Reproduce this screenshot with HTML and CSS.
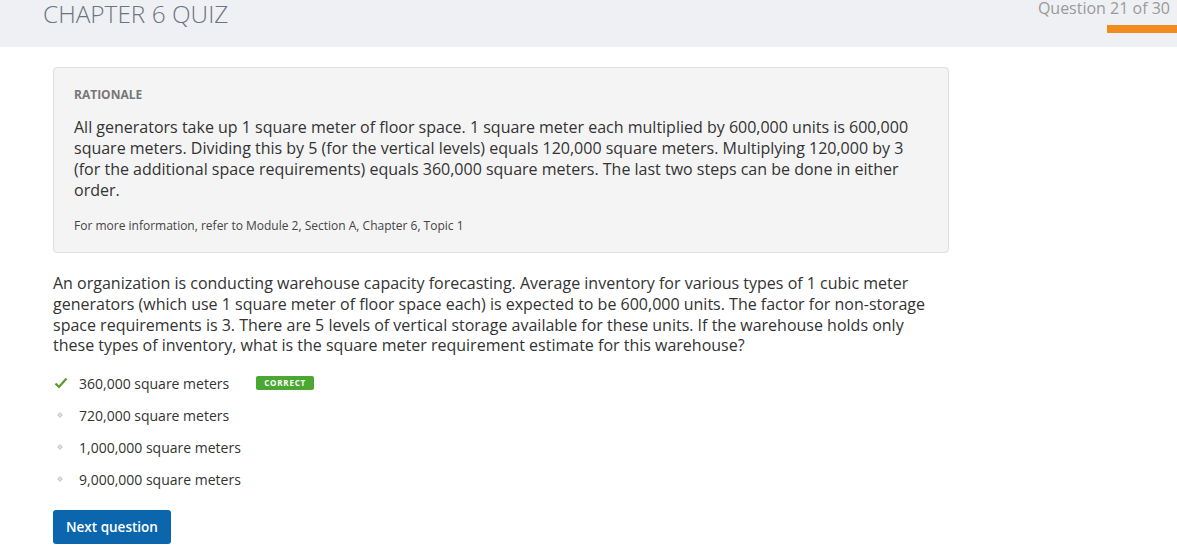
FILE: index.html
```html
<!DOCTYPE html>
<html>
<head>
<meta charset="utf-8">
<link rel="stylesheet" href="styles.css">
</head>
<body>
<header class="topbar">
  <h1 class="title">CHAPTER 6 QUIZ</h1>
  <div class="progress">
    <div class="progress-label">Question 21 of 30</div>
    <div class="progress-bar"></div>
  </div>
</header>
<main class="content">
  <section class="rationale">
    <h2 class="rationale-head">RATIONALE</h2>
    <p class="rationale-text">All generators take up 1 square meter of floor space. 1 square meter each multiplied by 600,000 units is 600,000 square meters. Dividing this by 5 (for the vertical levels) equals 120,000 square meters. Multiplying 120,000 by 3 (for the additional space requirements) equals 360,000 square meters. The last two steps can be done in either order.</p>
    <p class="rationale-ref">For more information, refer to Module 2, Section A, Chapter 6, Topic 1</p>
  </section>
  <p class="question">An organization is conducting warehouse capacity forecasting. Average inventory for various types of 1 cubic meter generators (which use 1 square meter of floor space each) is expected to be 600,000 units. The factor for non-storage space requirements is 3. There are 5 levels of vertical storage available for these units. If the warehouse holds only these types of inventory, what is the square meter requirement estimate for this warehouse?</p>
  <ul class="answers">
    <li class="answer">
      <span class="mark"><svg width="14" height="12" viewBox="0 0 14 12"><path d="M1.5 6.5 L5 10 L12.5 1.5" fill="none" stroke="#5a9a25" stroke-width="2.2"/></svg></span>
      <span class="answer-text">360,000 square meters</span>
      <span class="badge">CORRECT</span>
    </li>
    <li class="answer"><span class="mark"><span class="dot"></span></span><span class="answer-text">720,000 square meters</span></li>
    <li class="answer"><span class="mark"><span class="dot"></span></span><span class="answer-text">1,000,000 square meters</span></li>
    <li class="answer"><span class="mark"><span class="dot"></span></span><span class="answer-text">9,000,000 square meters</span></li>
  </ul>
  <button class="next">Next question</button>
</main>
</body>
</html>
```
FILE: styles.css
```css
* { box-sizing: border-box; }
body {
  margin: 0;
  font-family: "Open Sans", "Liberation Sans", sans-serif;
  color: #333;
  background: #fff;
}
.topbar {
  height: 47px;
  background: #eff0f4;
  display: flex;
  justify-content: space-between;
  align-items: flex-start;
  padding-left: 43px;
}
.title {
  margin: 0;
  font-weight: 300;
  font-size: 24.4px;
  line-height: 28px;
  color: #6d7480;
}
.progress {
  display: flex;
  flex-direction: column;
  align-items: flex-end;
}
.progress-label {
  font-size: 16px;
  line-height: 16px;
  color: #9a9a9a;
  padding-right: 7px;
}
.progress-bar {
  margin-top: 9px;
  width: 70px;
  height: 8px;
  background: #f28b1e;
}
.content {
  padding: 20px 0 0 53px;
  width: 949px;
}
.rationale {
  background: #f4f4f4;
  border: 1px solid #dedede;
  border-radius: 4px;
  padding: 19px 20px 18px 20px;
}
.rationale-head {
  margin: 0 0 14px;
  font-size: 12px;
  font-weight: 700;
  color: #777;
  line-height: 16px;
}
.rationale-text {
  margin: 0 0 17px;
  font-size: 16px;
  line-height: 21px;
  color: #333;
}
.rationale-ref {
  margin: 0;
  font-size: 12px;
  line-height: 16px;
  color: #444;
}
.question {
  width: 885px;
  margin: 20px 0 11px;
  font-size: 16px;
  line-height: 20.8px;
  color: #333;
}
.answers {
  list-style: none;
  margin: 0;
  padding: 0;
}
.answer {
  display: flex;
  align-items: center;
  height: 32px;
  font-size: 14px;
}
.mark {
  width: 26px;
  display: flex;
  justify-content: flex-start;
  align-items: center;
  padding-left: 1px;
}
.dot {
  width: 4px;
  height: 4px;
  margin-left: 4px;
  border: 1px solid #c8c8c8;
  background: #e4e4e4;
  transform: rotate(45deg);
}
.answer-text { color: #333; }
.badge {
  margin-left: 27px;
  background: #4aa832;
  color: #fff;
  font-size: 8px;
  font-weight: 700;
  letter-spacing: 0.8px;
  height: 14px;
  padding: 0 8px;
  line-height: 14px;
  border-radius: 2px;
}
.next {
  margin-top: 15px;
  background: #0b66ad;
  color: #fff;
  border: none;
  border-radius: 3px;
  font-family: "Open Sans", "Liberation Sans", sans-serif;
  font-size: 13.5px;
  font-weight: 600;
  height: 34px;
  padding: 0 13px;
}
```
